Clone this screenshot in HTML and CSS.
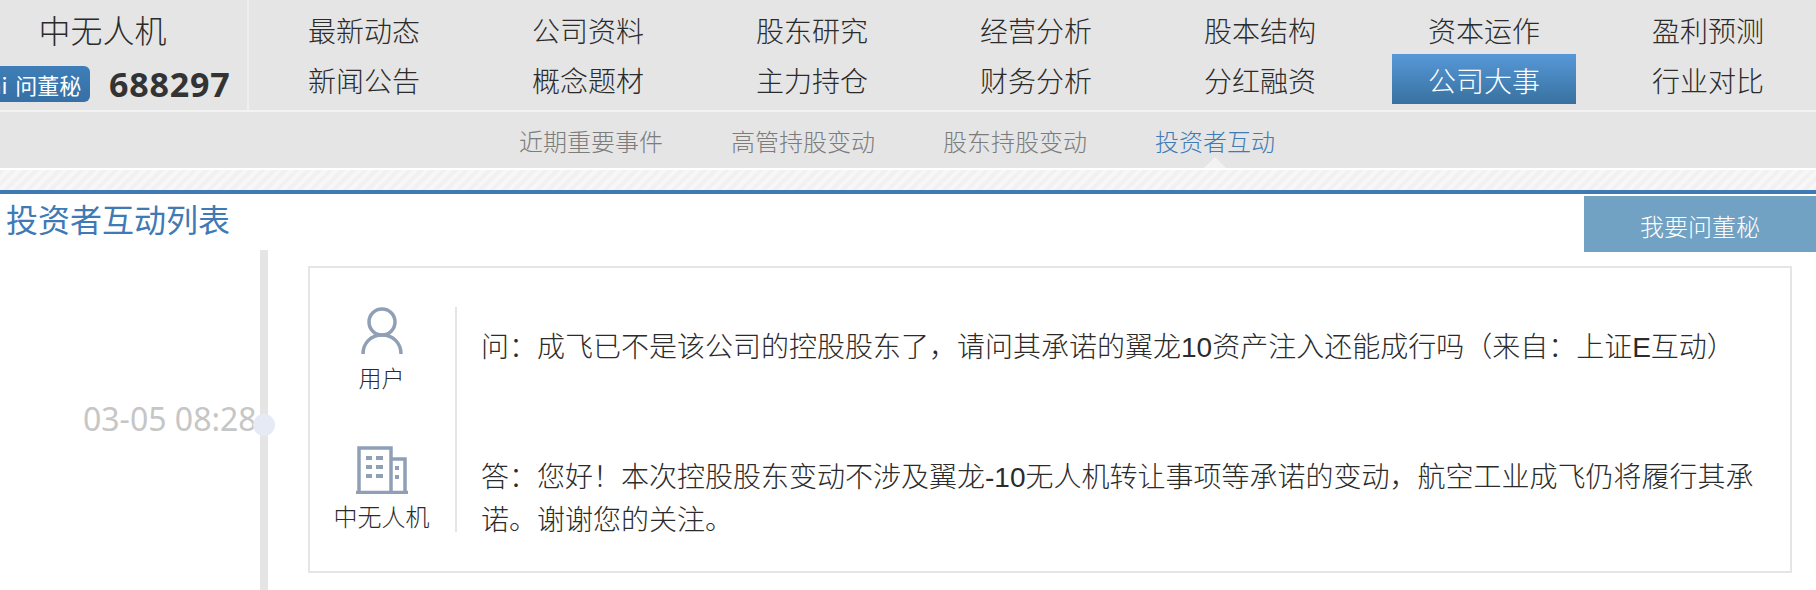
FILE: index.html
```html
<!DOCTYPE html>
<html lang="zh-CN">
<head>
  <meta charset="UTF-8">
  <title>投资者互动</title>
  <link rel="stylesheet" href="styles.css">
</head>
<body>
  <div class="top">
    <div class="stock">
      <div class="stock-name">中无人机</div>
      <div class="stock-line">
        <span class="badge">ai 问董秘</span>
        <span class="stock-code">688297</span>
      </div>
    </div>
    <div class="menu">
      <a href="#">最新动态</a>
      <a href="#">公司资料</a>
      <a href="#">股东研究</a>
      <a href="#">经营分析</a>
      <a href="#">股本结构</a>
      <a href="#">资本运作</a>
      <a href="#">盈利预测</a>
      <a href="#">新闻公告</a>
      <a href="#">概念题材</a>
      <a href="#">主力持仓</a>
      <a href="#">财务分析</a>
      <a href="#">分红融资</a>
      <a href="#" class="active">公司大事</a>
      <a href="#">行业对比</a>
    </div>
  </div>

  <div class="subnav">
    <a href="#">近期重要事件</a>
    <a href="#">高管持股变动</a>
    <a href="#">股东持股变动</a>
    <a href="#" class="current">投资者互动</a>
  </div>
  <div class="hatch"></div>

  <div class="title-row">
    <h2>投资者互动列表</h2>
    <a href="#" class="ask">我要问董秘</a>
  </div>

  <div class="timeline">
    <div class="when">
      <span class="date">03-05 08:28</span>
      <i class="dot"></i>
    </div>
    <div class="card">
      <div class="who">
        <div class="person">
          <svg width="42" height="48" viewBox="0 0 42 48" fill="none" stroke="#8fa0b6" stroke-width="3.5">
            <circle cx="21" cy="15" r="13"/>
            <path d="M2 47c0-11 8-19 19-19s19 8 19 19"/>
          </svg>
          <span>用户</span>
        </div>
        <div class="person company">
          <svg width="52" height="48" viewBox="0 0 52 48" fill="none">
            <path d="M3 46V2h32v44M35 13h14v33" stroke="#8fa0b6" stroke-width="3.5"/>
            <path d="M0 46.5h52" stroke="#8fa0b6" stroke-width="3.5"/>
            <path d="M10 12h6M20 12h7M10 21h6M20 21h7M10 30h6M20 30h7" stroke="#8fa0b6" stroke-width="4"/>
            <path d="M41 20v4M41 29v4" stroke="#8fa0b6" stroke-width="4"/>
          </svg>
          <span>中无人机</span>
        </div>
      </div>
      <div class="talk">
        <p class="question">问：成飞已不是该公司的控股股东了，请问其承诺的翼龙10资产注入还能成行吗（来自：上证E互动）</p>
        <p class="answer">答：您好！本次控股股东变动不涉及翼龙-10无人机转让事项等承诺的变动，航空工业成飞仍将履行其承诺。谢谢您的关注。</p>
      </div>
    </div>
  </div>
</body>
</html>
```

FILE: styles.css
```css
* {
  box-sizing: border-box;
}

html, body {
  height: 590px;
  overflow: hidden;
}

body {
  margin: 0;
  background: #fff;
  color: #2b2b2b;
  font-family: "Noto Sans CJK SC", "Noto Sans", sans-serif;
}

a {
  text-decoration: none;
  color: inherit;
}

/* top bar */
.top {
  display: flex;
  height: 112px;
  background: #e5e5e5;
  border-bottom: 2px solid #f3f3f3;
}

.stock {
  width: 249px;
  border-right: 2px solid #efefef;
  overflow: hidden;
}

.stock-name {
  width: 205px;
  height: 62px;
  line-height: 58px;
  font-size: 32px;
  text-align: center;
  font-weight: 300;
}

.stock-line {
  display: flex;
  align-items: center;
  margin: 2px 0 0 -16px;
}

.badge {
  width: 106px;
  height: 36px;
  line-height: 36px;
  padding-left: 5px;
  font-size: 22px;
  word-spacing: 3px;
  color: #fff;
  white-space: nowrap;
  overflow: hidden;
  border-radius: 6px;
  background: linear-gradient(#3f7eb8, #3570a6);
}

.stock-code {
  margin-left: 19px;
  font-family: "Open Sans", sans-serif;
  font-size: 34px;
  font-weight: 700;
  line-height: 40px;
  letter-spacing: 0.8px;
  color: #333;
}

.menu {
  display: grid;
  grid-template-columns: repeat(7, 184px);
  grid-auto-rows: 50px;
  column-gap: 40px;
  padding: 4px 0 0 23px;
}

.menu a {
  text-align: center;
  font-size: 28px;
  line-height: 52px;
  font-weight: 300;
}

.menu a.active {
  color: #fff;
  background: linear-gradient(#5798d8, #37719f);
}

/* second level */
.subnav {
  display: flex;
  gap: 68px;
  height: 56px;
  padding-left: 519px;
  background: #e5e5e5;
}

.subnav a {
  position: relative;
  font-size: 24px;
  line-height: 58px;
  font-weight: 300;
  color: #7c7c7c;
}

.subnav a.current {
  color: #3f7ab5;
}

.subnav a.current::after {
  content: "";
  position: absolute;
  left: 50%;
  bottom: 0;
  margin-left: -11px;
  border: 11px solid transparent;
  border-top: 0;
  border-bottom-color: #f2f2f2;
}

.hatch {
  height: 26px;
  border-top: 2px solid #fff;
  border-bottom: 4px solid #3f7ab5;
  background: repeating-linear-gradient(135deg, #f1f1f1 0 4px, #f7f7f7 4px 8px);
}

/* title */
.title-row {
  display: flex;
  justify-content: space-between;
  height: 56px;
  margin-top: 2px;
}

.title-row h2 {
  margin: 0 0 0 6px;
  font-size: 32px;
  font-weight: 400;
  line-height: 44px;
  color: #3f7ab5;
}

.ask {
  width: 232px;
  height: 56px;
  line-height: 60px;
  text-align: center;
  font-size: 24px;
  font-weight: 300;
  color: #fff;
  background: #71a2c4;
}

/* timeline */
.timeline {
  display: flex;
  height: 340px;
  margin-top: -2px;
}

.when {
  position: relative;
  width: 268px;
  height: 100%;
  border-right: 8px solid #e5e5e5;
  padding: 147px 0 0 83px;
}

.date {
  display: block;
  font-family: "Noto Sans", sans-serif;
  font-size: 32px;
  line-height: 44px;
  color: #c6c6c6;
  white-space: nowrap;
}

.dot {
  position: absolute;
  top: 164px;
  right: -15px;
  width: 22px;
  height: 22px;
  border-radius: 50%;
  background: #e6eaf5;
}

.card {
  display: flex;
  width: 1484px;
  height: 307px;
  margin: 16px 0 0 40px;
  padding: 39px 0;
  border: 2px solid #e5e5e5;
}

.who {
  display: flex;
  flex-direction: column;
  justify-content: space-between;
  width: 147px;
  height: 225px;
  border-right: 2px solid #e5e5e5;
  padding-right: 2px;
}

.person {
  display: flex;
  flex-direction: column;
  align-items: center;
  font-size: 23px;
  font-weight: 300;
  line-height: 34px;
}

.person.company {
  font-size: 24px;
  margin-bottom: -1px;
}

.person svg {
  display: block;
  margin-bottom: 5px;
}

.talk {
  flex: 1;
  padding: 19px 30px 0 24px;
  font-family: "Liberation Sans", "Noto Sans CJK SC", sans-serif;
  font-size: 28px;
  font-weight: 300;
  line-height: 43px;
}

.talk p {
  margin: 0;
}

.talk .answer {
  margin-top: 87px;
}
```
